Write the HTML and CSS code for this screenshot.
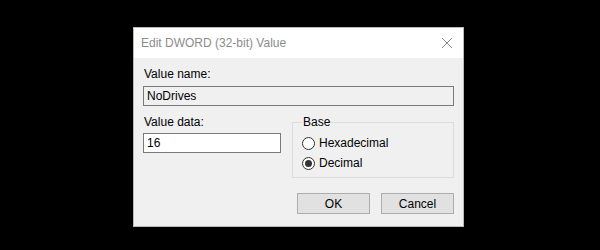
FILE: index.html
```html
<!DOCTYPE html>
<html lang="en">
<head>
  <meta charset="UTF-8" />
  <title>Edit DWORD (32-bit) Value</title>
  <link rel="stylesheet" href="styles.css">
</head>
<body>

  <div class="dialog">
    <div class="titlebar">
      <span class="title">Edit DWORD (32-bit) Value</span>
      <svg class="close" width="12" height="12" viewBox="0 0 12 12">
        <path d="M1 1 L11 11 M11 1 L1 11" stroke="#8a8a8a" stroke-width="1" fill="none" />
      </svg>
    </div>

    <div class="content">
      <label class="lbl" for="vname">Value name:</label>
      <input type="text" id="vname" class="field readonly" value="NoDrives" readonly />

      <div class="row">
        <div class="data-col">
          <label class="lbl" for="vdata">Value data:</label>
          <input type="text" id="vdata" class="field" value="16" />
        </div>

        <fieldset class="base">
          <legend>Base</legend>
          <div class="radio"><span class="dot"></span>Hexadecimal</div>
          <div class="radio"><span class="dot checked"></span>Decimal</div>
        </fieldset>
      </div>

      <div class="buttons">
        <button class="btn">OK</button>
        <button class="btn">Cancel</button>
      </div>
    </div>
  </div>

</body>
</html>
```

FILE: styles.css
```css
body {
  margin: 0;
  background: #000;
  font-family: "Liberation Sans", Arial, sans-serif;
  font-size: 12px;
  color: #000;
}
.dialog {
  width: 329px;
  margin: 27px 0 0 133px;
  border: 1px solid #b9b9b9;
  background: #f0f0f0;
}
.titlebar {
  height: 30px;
  background: #fff;
  display: flex;
  align-items: center;
  justify-content: space-between;
  padding: 0 10px 0 7px;
}
.title {
  color: #8c8c8c;
  font-size: 12px;
}
.content {
  padding: 9px 9px 12px 9px;
}
.lbl {
  display: block;
  margin-left: 1px;
  line-height: 15px;
  height: 15px;
}
.field {
  display: block;
  box-sizing: border-box;
  width: 100%;
  height: 20px;
  margin: 4px 0 0 0;
  padding: 0 3px;
  border: 1px solid #7a7a7a;
  background: #fff;
  font-family: inherit;
  font-size: 12px;
  color: #000;
  outline: none;
}
.field.readonly {
  background: #f0f0f0;
}
.row {
  display: flex;
  gap: 11px;
  margin-top: 9px;
}
.data-col {
  width: 138px;
}
.data-col .field {
  margin-top: 3px;
}
.base {
  flex: 1;
  margin: 0;
  padding: 3px 8px 10px 9px;
  border: 1px solid #dcdcdc;
  height: 48px;
}
.base legend {
  padding: 0 1px;
  line-height: 15px;
}
.radio {
  display: flex;
  align-items: center;
  height: 20px;
}
.dot {
  box-sizing: border-box;
  width: 13px;
  height: 13px;
  border: 1px solid #333;
  border-radius: 50%;
  background: #fff;
  margin-right: 4px;
  position: relative;
}
.dot.checked::after {
  content: "";
  position: absolute;
  left: 2px;
  top: 2px;
  width: 7px;
  height: 7px;
  border-radius: 50%;
  background: #333;
}
.buttons {
  display: flex;
  justify-content: flex-end;
  gap: 11px;
  margin-top: 15px;
}
.btn {
  width: 73px;
  height: 21px;
  border: 1px solid #adadad;
  background: #e1e1e1;
  font-family: inherit;
  font-size: 12px;
  color: #000;
  padding: 0;
}
```
